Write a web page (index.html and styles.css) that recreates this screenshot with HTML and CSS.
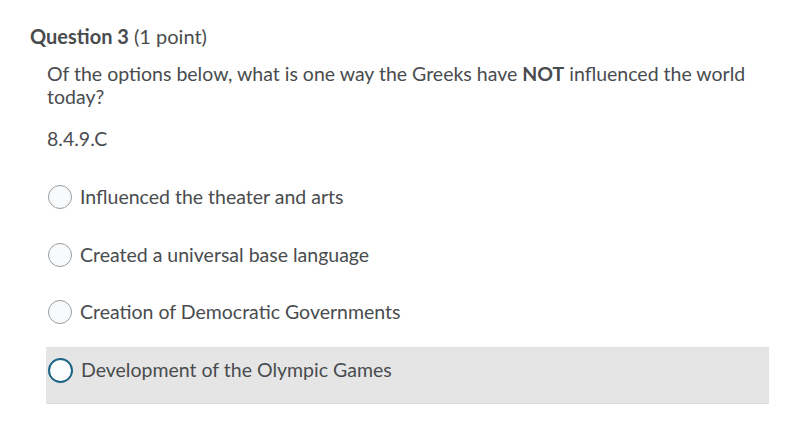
FILE: index.html
```html
<!DOCTYPE html>
<html lang="en">
<head>
    <meta charset="UTF-8">
    <title>Question 3</title>
    <link rel="stylesheet" href="styles.css">
</head>
<body>

<div class="question">
    <h2 class="question-title"><strong>Question 3</strong> (1 point)</h2>

    <div class="question-body">
        <p>Of the options below, what is one way the Greeks have <strong>NOT</strong> influenced the world today?</p>
        <p>8.4.9.C</p>
    </div>

    <div class="options">
        <label class="option">
            <span class="radio"></span>
            <span class="option-text">Influenced the theater and arts</span>
        </label>
        <label class="option">
            <span class="radio"></span>
            <span class="option-text">Created a universal base language</span>
        </label>
        <label class="option">
            <span class="radio"></span>
            <span class="option-text">Creation of Democratic Governments</span>
        </label>
        <label class="option option-hover">
            <span class="radio radio-focus"></span>
            <span class="option-text">Development of the Olympic Games</span>
        </label>
    </div>
</div>

</body>
</html>
```

FILE: styles.css
```css
body {
    margin: 0;
    background: #fff;
    font-family: Lato, "Noto Sans", sans-serif;
    color: #494c4e;
}

.question {
    padding: 24px 20px 0 30px;
}

.question-title {
    margin: 0;
    font-size: 20px;
    font-weight: normal;
    line-height: 24px;
}

.question-title strong {
    font-weight: bold;
}

.question-body {
    padding-left: 17px;
    padding-right: 20px;
    margin-top: 14px;
}

.question-body p {
    margin: 0 0 19px;
    font-size: 19.5px;
    line-height: 23px;
}

.question-body strong {
    font-weight: bold;
}

.options {
    margin-top: 24px;
    margin-left: 16px;
}

.option {
    display: flex;
    align-items: flex-start;
    height: 57.5px;
    padding: 11px 0 0 2px;
    box-sizing: border-box;
    cursor: pointer;
}

.option-hover {
    height: 57px;
    background: #e5e5e5;
    border-top: 1px solid #e0e0e0;
    border-bottom: 1px solid #dedede;
    padding-top: 10px;
}

.radio {
    width: 22px;
    height: 22px;
    border: 1px solid #9a9c9e;
    border-radius: 50%;
    background: #f9fafb;
    flex: 0 0 auto;
}

.radio-focus {
    width: 21px;
    height: 21px;
    border: 2px solid #1d6585;
    background: #fbfcfd;
}

.option-text {
    margin-left: 8px;
    font-size: 19.5px;
    line-height: 24px;
}
```
